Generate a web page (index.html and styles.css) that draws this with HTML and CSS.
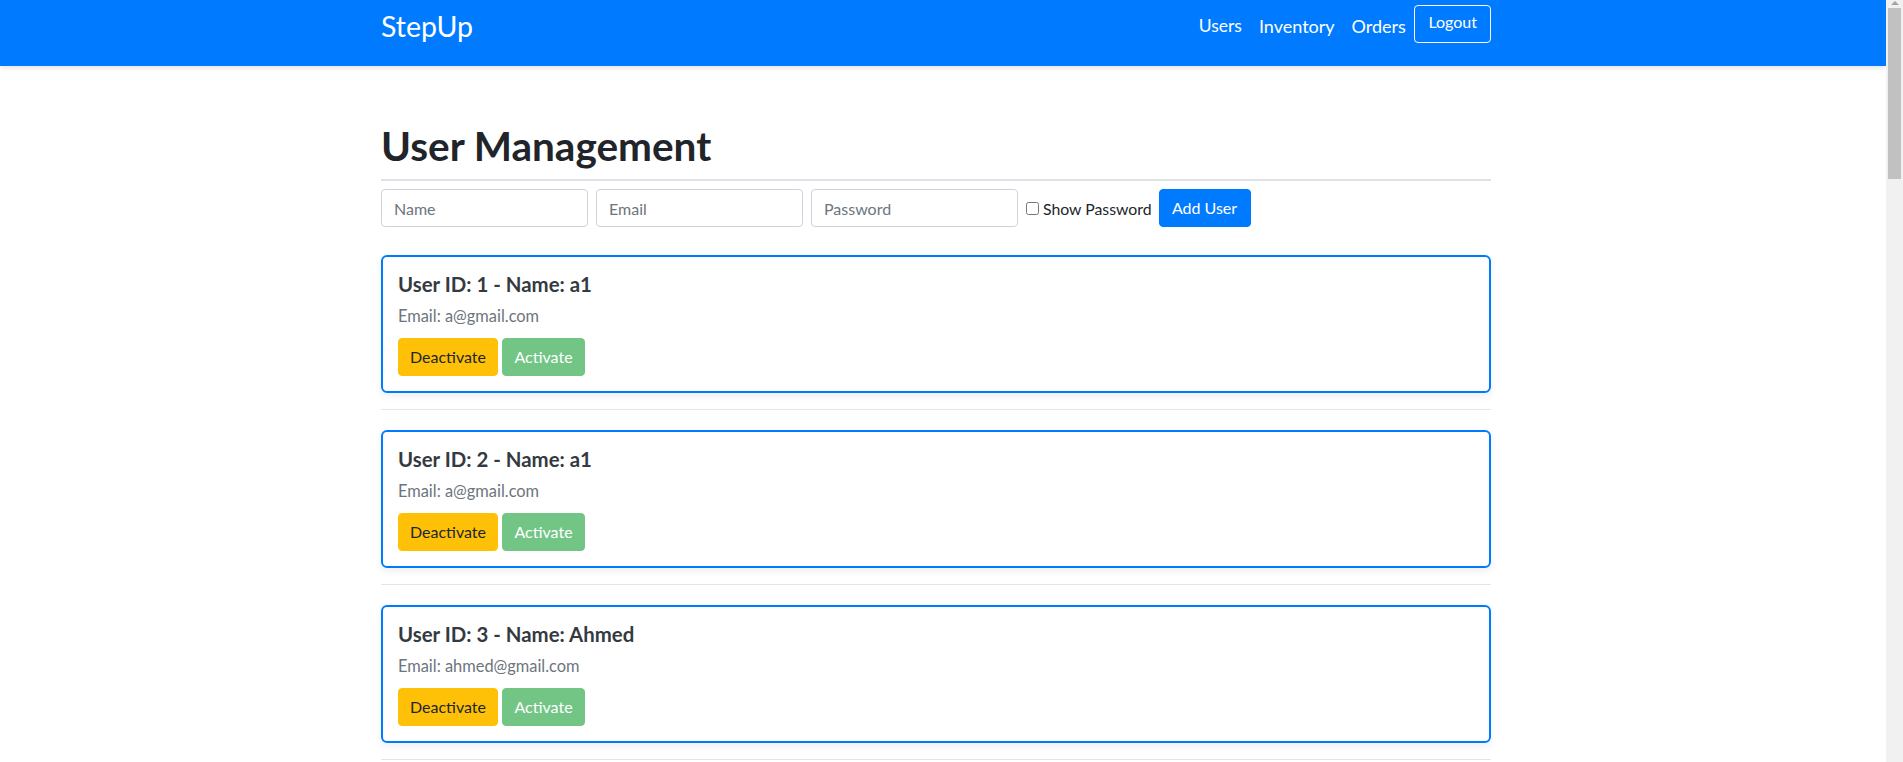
FILE: index.html
```html
<!DOCTYPE html>
<html lang="en">
<head>
<meta charset="utf-8">
<title>StepUp - User Management</title>
<link rel="stylesheet" href="styles.css">
</head>
<body>
<div class="page">
  <nav class="navbar">
    <div class="container nav-inner">
      <a class="brand" href="#">StepUp</a>
      <div class="nav-right">
        <a class="nav-link" href="#">Users</a>
        <a class="nav-link" href="#">Inventory</a>
        <a class="nav-link" href="#">Orders</a>
        <button class="btn-logout">Logout</button>
      </div>
    </div>
  </nav>

  <main class="container">
    <h1 class="title">User Management</h1>
    <div class="rule"></div>
    <form class="add-form">
      <input class="field" type="text" placeholder="Name">
      <input class="field" type="email" placeholder="Email">
      <input class="field" type="password" placeholder="Password">
      <label class="show-pass"><input type="checkbox" class="check">Show Password</label>
      <button type="button" class="btn btn-primary">Add User</button>
    </form>

    <div class="user-list">
      <div class="user-item">
        <div class="card">
          <h5 class="card-title">User ID: 1 - Name: a1</h5>
          <p class="card-email">Email: a@gmail.com</p>
          <div class="actions">
            <button class="btn btn-warning">Deactivate</button>
            <button class="btn btn-success" disabled>Activate</button>
          </div>
        </div>
        <div class="sep"></div>
      </div>
      <div class="user-item">
        <div class="card">
          <h5 class="card-title">User ID: 2 - Name: a1</h5>
          <p class="card-email">Email: a@gmail.com</p>
          <div class="actions">
            <button class="btn btn-warning">Deactivate</button>
            <button class="btn btn-success" disabled>Activate</button>
          </div>
        </div>
        <div class="sep"></div>
      </div>
      <div class="user-item">
        <div class="card">
          <h5 class="card-title">User ID: 3 - Name: Ahmed</h5>
          <p class="card-email">Email: ahmed@gmail.com</p>
          <div class="actions">
            <button class="btn btn-warning">Deactivate</button>
            <button class="btn btn-success" disabled>Activate</button>
          </div>
        </div>
        <div class="sep"></div>
      </div>
    </div>
  </main>
</div>
<div class="scrollbar"><div class="scroll-arrow"></div><div class="scroll-thumb"></div></div>
</body>
</html>
```

FILE: styles.css
```css
* { box-sizing: border-box; }

html, body {
  margin: 0;
  height: 100%;
  overflow: hidden;
}

body {
  display: flex;
  font-family: "Lato", "Noto Sans", sans-serif;
  color: #212529;
  background: #fff;
}

.page {
  flex: 1;
  min-width: 0;
  height: 100%;
  overflow: hidden;
}

.scrollbar {
  width: 17px;
  flex: none;
  background: #f1f1f1;
  display: flex;
  flex-direction: column;
  align-items: center;
}

.scroll-arrow {
  width: 0;
  height: 0;
  margin-top: 1px;
  border-left: 4px solid transparent;
  border-right: 4px solid transparent;
  border-bottom: 4px solid #a3a3a3;
}

.scroll-thumb {
  width: 13px;
  height: 171px;
  margin-top: 3px;
  background: #c1c1c1;
}

.container {
  width: 1110px;
  margin-left: 381px;
}

/* navbar */
.navbar {
  background: #007bff;
  height: 66px;
  box-shadow: 0 2px 5px rgba(0, 0, 0, 0.1);
  position: relative;
  z-index: 1;
}

.nav-inner {
  display: flex;
  justify-content: space-between;
  align-items: flex-start;
  height: 66px;
}

.brand {
  color: #fff;
  text-decoration: none;
  font-size: 28.5px;
  line-height: 34px;
  margin-top: 9px;
}

.nav-right {
  display: flex;
  align-items: flex-start;
}

.nav-link {
  color: #fff;
  text-decoration: none;
  font-size: 18px;
  line-height: 22px;
  padding: 0 8.5px;
  margin-top: 15px;
}

.nav-link:first-child {
  font-size: 17.5px;
}

.btn-logout {
  font-family: inherit;
  margin-top: 5px;
  height: 38px;
  padding: 0 13px 4px;
  background: transparent;
  border: 1px solid #fff;
  border-radius: 4px;
  color: #fff;
  font-size: 16px;
  line-height: 20px;
}

/* heading */
.title {
  margin: 56px 0 0;
  font-size: 40.5px;
  line-height: 48px;
  font-weight: 700;
  color: #212529;
}

.rule {
  height: 2px;
  background: #dee2e6;
  margin-top: 9px;
}

.add-form {
  display: flex;
  align-items: center;
  gap: 8px;
  margin-top: 8px;
}

.field {
  width: 207px;
  height: 38px;
  border: 1px solid #ced4da;
  border-radius: 4px;
  padding: 0 12px;
  font-family: inherit;
  font-size: 16px;
  color: #495057;
}

.field::placeholder {
  color: #6c757d;
}

.show-pass {
  display: flex;
  align-items: center;
  font-size: 15.8px;
  color: #212529;
  margin-right: -1px;
}

.check {
  width: 13px;
  height: 13px;
  margin: 0 4px 0 0;
}

.btn {
  font-family: inherit;
  height: 38px;
  border: 1px solid transparent;
  border-radius: 4px;
  font-size: 16px;
  line-height: 20px;
  padding: 0;
}

.btn-primary {
  background: #007bff;
  border-color: #007bff;
  color: #fff;
  width: 92px;
}

.btn-warning {
  background: #ffc107;
  border-color: #ffc107;
  color: #212529;
  width: 100px;
}

.btn-success {
  background: #73c586;
  border-color: #73c586;
  color: #fff;
  width: 83px;
}

/* user list */
.user-list {
  margin-top: 28px;
}

.card {
  border: 2px solid #007bff;
  border-radius: 6px;
  padding: 15px;
  height: 138px;
  box-shadow: 0 3px 8px rgba(0, 0, 0, 0.07);
}

.card-title {
  margin: 0;
  font-size: 20.4px;
  line-height: 24px;
  font-weight: 700;
  color: #343a40;
}

.card-email {
  margin: 10px 0 0;
  font-size: 16.4px;
  line-height: 20px;
  color: #6c757d;
}

.actions {
  display: flex;
  gap: 4px;
  margin-top: 12px;
}

.sep {
  height: 1px;
  background: #e5e5e5;
  margin: 16px 0 20px;
}
```
